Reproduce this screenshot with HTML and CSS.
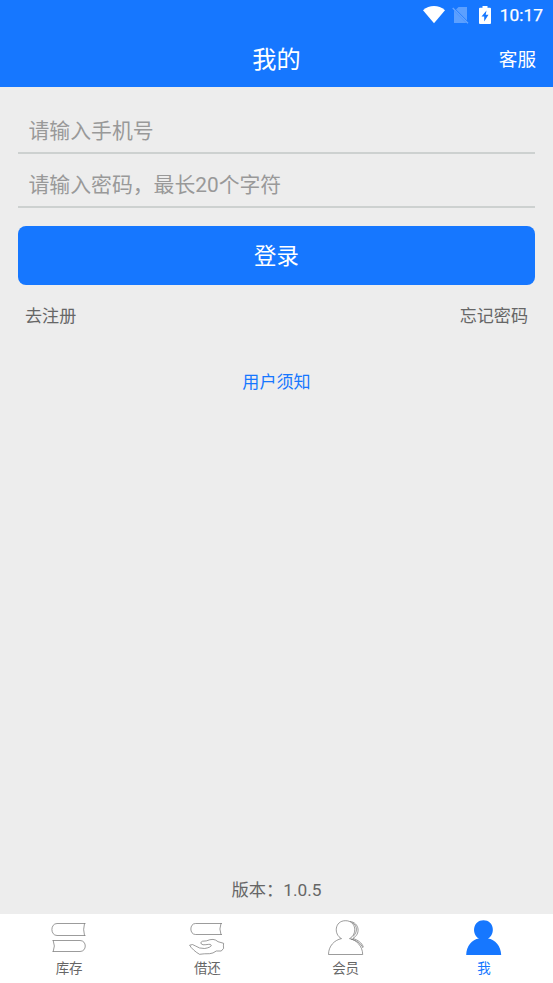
FILE: index.html
```html
<!DOCTYPE html>
<html lang="zh-CN">
<head>
<meta charset="utf-8">
<title>我的</title>
<link rel="stylesheet" href="styles.css">
</head>
<body>
<div class="app">
  <header class="header">
    <div class="status">
      <svg class="wifi" width="22" height="18" viewBox="0 0 22 18"><path d="M0 4.2Q5 0 11 0T22 4.2L11 17.3Z" fill="#fff"/></svg>
      <svg class="sim" width="17" height="18" viewBox="0 0 17 18"><path d="M6.500 1H15V14.500L4 3.500ZM2 4.500L14.500 17H2Z" fill="#fff" opacity=".3"/><path d="M.7 2L16 17.300" stroke="#fff" stroke-opacity=".35" stroke-width="1.300"/></svg>
      <svg class="battery" width="12" height="18" viewBox="0 0 12 18"><path d="M3.500 0H8.500V1.700H11Q12 1.700 12 2.700V17Q12 18 11 18H1Q0 18 0 17V2.700Q0 1.700 1 1.700H3.500Z" fill="#fff"/><path d="M7.500 4.500L2.500 10.400H5.200V15.500L9.500 8.800H6.700Z" fill="#1677ff"/></svg>
      <span class="time">10:17</span>
    </div>
    <div class="nav">
      <span></span>
      <h1 class="title">我的</h1>
      <a class="service">客服</a>
    </div>
  </header>
  <main class="main">
    <div class="field">请输入手机号</div>
    <div class="field">请输入密码，最长20个字符</div>
    <div class="login">登录</div>
    <div class="links"><a>去注册</a><a>忘记密码</a></div>
    <a class="notice">用户须知</a>
    <p class="version">版本：1.0.5</p>
  </main>
  <footer class="tabs">
    <div class="tab">
      <svg class="icon" width="36" height="36" viewBox="0 0 36 36"><g fill="none" stroke="#666" stroke-width=".65"><path d="M34.500 3.500H6C-.8 3.500-.8 15.500 6 15.500H34.500M33.500 3.500Q31.800 9.500 33.500 15.500M1.500 20.500H29C36 20.500 36 31.500 29 31.500H1.500M2.200 20.500Q4.500 26 2.200 31.500"/></g></svg>
      <span>库存</span>
    </div>
    <div class="tab">
      <svg class="icon" width="36" height="36" viewBox="0 0 36 36"><g fill="none" stroke="#666" stroke-width=".65" stroke-linejoin="round"><path d="M33 3.500H6.500C.3 3.500.3 14.500 6.500 14.500H33M32 3.500Q29.800 9 32 14.500"/><path d="M.6 25.200Q3.500 23.500 6.600 26Q10 28.700 15.600 28.500Q22 27.500 22.300 25.200C21.500 23.300 18 25 14 24.800Q11.500 24 11.800 22.500Q12.500 20.700 17.300 20.900Q21 19.300 24 19.400Q27 19.700 29 21.700L34.600 23.300Q34.200 26 34.600 28.300L32.300 31H27.300Q24 33.500 20.600 33.700Q15 33.600 10.600 34.300C7 32.500 2 28 .6 25.200Z"/></g></svg>
      <span>借还</span>
    </div>
    <div class="tab">
      <svg class="icon" width="36" height="36" viewBox="0 0 36 36"><g fill="none" stroke="#666" stroke-width=".65"><path d="M13.500 18.600C5.500 14.500 6.500.7 17.500.7S29.500 14.500 21.500 18.600C28.500 20 34.500 26 34.700 34.500H.5C.5 26 6.500 20 13.500 18.600Z"/><path d="M22 1.500C31.500 2.500 33 14.500 24.500 18.500M24.500 2.500C29.500 6 29.800 12 25 16.500M23 19.200C28 20 33 23.500 35 28M25 18.500C30 20 34 23 35.300 27"/></g></svg>
      <span>会员</span>
    </div>
    <div class="tab active">
      <svg class="icon" width="36" height="36" viewBox="0 0 36 36"><path d="M13 18.600C5 14 7 .2 17.500.2S30 14 22 18.600C29 19.500 35 26 35.200 35H.2C.4 26 6 19.500 13 18.600Z" fill="#1677ff"/></svg>
      <span>我</span>
    </div>
  </footer>
</div>
</body>
</html>
```
FILE: styles.css
```css
* { box-sizing: border-box; }
body {
  margin: 0;
  font-family: Roboto, "Noto Sans CJK SC", sans-serif;
  color: #666;
  background: #ededed;
}
.app { height: 983px; display: flex; flex-direction: column; }
.header { height: 87px; background: #1677ff; color: #fff; }
.status {
  height: 30px;
  display: flex;
  align-items: center;
  justify-content: flex-end;
  padding-right: 10px;
}
.sim { margin-left: 7px; }
.battery { margin-left: 10px; }
.time { margin-left: 9px; font-size: 17.400px; font-weight: 400; line-height: 30px; -webkit-text-stroke: .25px #fff; }
.nav {
  height: 57px;
  display: grid;
  grid-template-columns: 1fr auto 1fr;
  align-items: center;
  padding: 0 17px;
}
.title { margin: 0; font-size: 24.2px; font-weight: 400; line-height: 53px; padding-top: 4px; }
.service { justify-self: end; font-size: 18.600px; line-height: 53px; padding-top: 4px; }
.main {
  flex: 1;
  display: flex;
  flex-direction: column;
  padding: 13px 18px 0;
}
.field {
  height: 54px;
  padding-left: 10.500px;
  border-bottom: 2px solid #cdd1d0;
  font-size: 20.850px;
  line-height: 62px;
  color: #999;
}
.login {
  height: 59px;
  margin-top: 18px;
  border-radius: 8px;
  background: #1677ff;
  color: #fff;
  font-size: 22.400px;
  line-height: 61px;
  text-align: center;
}
.links {
  display: flex;
  justify-content: space-between;
  padding: 0 7px;
  margin-top: 16px;
  font-size: 17.100px;
  line-height: 30px;
}
.notice {
  margin-top: 36px;
  text-align: center;
  color: #1677ff;
  font-size: 17.100px;
  line-height: 30px;
}
.version {
  margin: auto 0 9px;
  text-align: center;
  font-size: 17.300px;
  line-height: 30px;
}
.tabs {
  height: 69px;
  display: grid;
  grid-template-columns: repeat(4, 1fr);
  background: #fff;
}
.tab {
  display: flex;
  flex-direction: column;
  align-items: center;
  padding-top: 6px;
  font-size: 13.500px;
  line-height: 20px;
}
.icon { margin-bottom: 2px; }
.active { color: #1677ff; }
```
